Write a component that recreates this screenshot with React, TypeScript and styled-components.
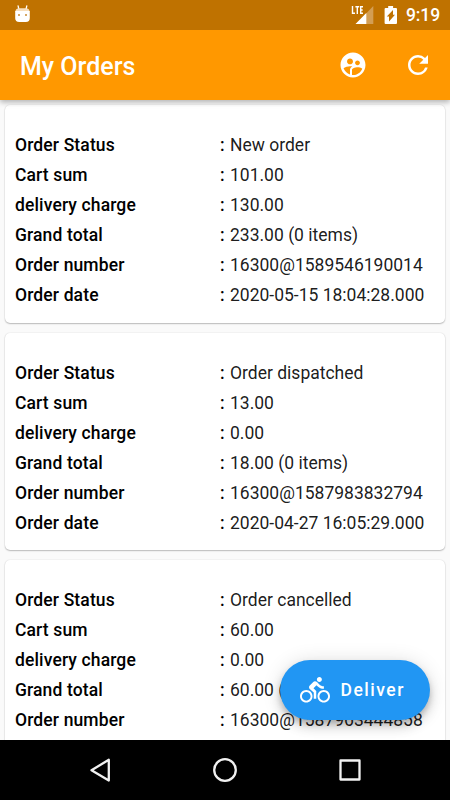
import React from "react";
import styled, { createGlobalStyle } from "styled-components";
import { MdSupervisedUserCircle, MdRefresh, MdDirectionsBike } from "react-icons/md";

const GlobalStyle = createGlobalStyle`
  * { box-sizing: border-box; }
  body { margin: 0; overflow: hidden; font-family: Roboto, "Noto Sans", sans-serif; }
  svg { display: block; flex: none; }
`;

const Screen = styled.div`
  width: 450px;
  height: 800px;
  display: flex;
  flex-direction: column;
  background: #fafafa;
  overflow: hidden;
`;

const StatusBar = styled.div`
  height: 30px;
  flex: none;
  display: flex;
  align-items: center;
  padding: 0 10px 0 14px;
  background: #bf7200;
  color: #fff;
  z-index: 2;
`;

const StatusIcons = styled.div`
  display: flex;
  align-items: center;
  margin-left: auto;
`;

const BatteryIcon = styled.svg`
  margin-left: 10px;
`;

const Clock = styled.span`
  margin-left: 8px;
  font-size: 17.5px;
  line-height: 32px;
  font-weight: 500;
  letter-spacing: -0.1px;
`;

const AppBar = styled.header`
  height: 70px;
  flex: none;
  display: flex;
  align-items: center;
  padding: 0 17.5px 0 20px;
  background: #ff9800;
  color: #fff;
  box-shadow: 0 2px 5px rgba(0, 0, 0, 0.2), 0 3px 6px rgba(0, 0, 0, 0.1);
  z-index: 1;
`;

const Title = styled.h1`
  margin: 2px auto 0 0;
  font-size: 25px;
  font-weight: 500;
  letter-spacing: 0;
`;

const BarButton = styled.button`
  border: 0;
  padding: 0;
  background: none;
  color: inherit;
  & + & { margin-left: 35px; }
`;

const Orders = styled.main`
  flex: 1;
  min-height: 0;
  padding: 5px 5px 0;
  overflow: hidden;
`;

const Card = styled.section`
  height: 217.5px;
  padding: 25px 10px 12.5px;
  margin-bottom: 10px;
  background: #fff;
  border-radius: 5px;
  box-shadow: 0 1px 1.5px rgba(0, 0, 0, 0.24), 0 0 1.5px rgba(0, 0, 0, 0.14);
`;

const Row = styled.div`
  display: grid;
  grid-template-columns: 205px 10px 1fr;
  height: 30px;
  line-height: 31px;
  font-size: 17.5px;
  letter-spacing: 0;
  color: #000;
  white-space: nowrap;
`;

const Label = styled.span`
  font-weight: 500;
  letter-spacing: 0.13px;
`;

const Value = styled.span`
  color: rgba(0, 0, 0, 0.9);
`;

const DeliverButton = styled.button`
  position: absolute;
  left: 280px;
  top: 660px;
  width: 150px;
  height: 60px;
  display: flex;
  align-items: center;
  gap: 10.5px;
  padding: 0 20px;
  border: 0;
  border-radius: 30px;
  background: #2196f3;
  color: #fff;
  font: 500 17.5px/60px Roboto, sans-serif;
  letter-spacing: 1.5px;
  box-shadow: 0 4px 6px -1px rgba(0, 0, 0, 0.2), 0 7px 12px rgba(0, 0, 0, 0.14),
    0 1px 20px rgba(0, 0, 0, 0.12);
`;

const NavBar = styled.nav`
  height: 60px;
  flex: none;
  display: flex;
  align-items: center;
  justify-content: center;
  gap: 95px;
  background: #000;
  z-index: 1;
`;

const NavIcon = styled.svg`
  fill: none;
  stroke: #f1f1f1;
  stroke-width: 2.3;
  stroke-linejoin: round;
`;

type Order = string[];

const labels = ["Order Status", "Cart sum", "delivery charge", "Grand total", "Order number", "Order date"];

const orders: Order[] = [
  ["New order", "101.00", "130.00", "233.00 (0 items)", "16300@1589546190014", "2020-05-15 18:04:28.000"],
  ["Order dispatched", "13.00", "0.00", "18.00 (0 items)", "16300@1587983832794", "2020-04-27 16:05:29.000"],
  ["Order cancelled", "60.00", "0.00", "60.00 (0 items)", "16300@1587963444858"],
];

function OrderCard({ order }: { order: Order }) {
  return (
    <Card>
      {order.map((value, i) => (
        <Row key={labels[i]}>
          <Label>{labels[i]}</Label>
          <Label>:</Label>
          <Value>{value}</Value>
        </Row>
      ))}
    </Card>
  );
}

export default function App() {
  return (
    <>
      <GlobalStyle />
      <Screen>
        <StatusBar>
          <svg width="17" height="20" viewBox="0 0 17 20">
            <path d="M4.9 4.5 4.1.8M12 4.5l.8-3.7" stroke="#fff" strokeWidth="1.3" strokeLinecap="round" />
            <path d="M1.3 6.5Q2 3.3 5 3.3h7q3 0 3.7 3.2z" fill="#f7dfbd" />
            <path d="M1.2 6h14.6v7q0 4-4 4H5.2q-4 0-4-4z" fill="#fff" />
            <circle cx="5" cy="9.9" r="1" fill="#c98a32" />
            <circle cx="12" cy="9.9" r="1" fill="#c98a32" />
          </svg>
          <StatusIcons>
            <svg width="23" height="20" viewBox="0 0 23 20">
              <path d="M22.3 1v18H5z" fill="#d39e53" />
              <path d="M15.3 8v11H4.5z" fill="#fff" />
              <path d="M0 0h12.4v9.5H0z" fill="#bf7200" />
              <path d="M1.5 1v7.3H4M4.4 1.7h3.8M6.3 1.7V9M12 1.7H9.7v6.6H12M9.7 5h2" fill="none" stroke="#fff" strokeWidth="1.4" />
            </svg>
            <BatteryIcon width="14" height="20" viewBox="0 0 14 20">
              <path d="M4.2 1h4.9v2H12q1 0 1 1v14q0 1-1 1H1.6q-1 0-1-1V4q0-1 1-1h2.6z" fill="#fff" />
              <path d="M9 5v4.8h2L5 16.4v-4.9H2.8z" fill="#bf7200" />
            </BatteryIcon>
            <Clock>9:19</Clock>
          </StatusIcons>
        </StatusBar>
        <AppBar>
          <Title>My Orders</Title>
          <BarButton aria-label="Account"><MdSupervisedUserCircle size={30} /></BarButton>
          <BarButton aria-label="Refresh"><MdRefresh size={30} /></BarButton>
        </AppBar>
        <Orders>
          {orders.map((order) => <OrderCard key={order[4]} order={order} />)}
        </Orders>
        <DeliverButton><MdDirectionsBike size={30} />Deliver</DeliverButton>
        <NavBar>
          <NavIcon width="30" height="30" viewBox="0 0 30 30"><path d="M23.8 4.8v20.8L6.5 15.2z" /></NavIcon>
          <NavIcon width="30" height="30" viewBox="0 0 30 30"><circle cx="15" cy="15" r="10.8" /></NavIcon>
          <NavIcon width="30" height="30" viewBox="0 0 30 30"><rect x="5.5" y="5.5" width="19" height="19" /></NavIcon>
        </NavBar>
      </Screen>
    </>
  );
}
